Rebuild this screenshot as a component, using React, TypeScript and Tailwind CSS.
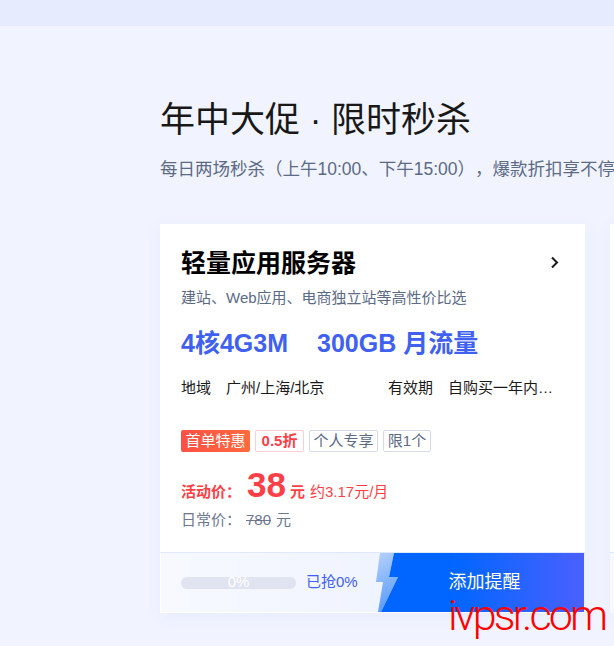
export default function App() {
  return (
    <div className="relative w-[614px] h-[646px] overflow-hidden bg-[#f1f4ff] [text-spacing-trim:space-all] font-['Liberation_Sans','Noto_Sans_CJK_SC',sans-serif]">
      <div className="h-[26px] bg-[#e6ecfe]" />
      <div className="pl-[160px] pt-[72px] w-[1000px]">
        <h1 className="text-[35px] leading-[44px] text-[#181818] font-normal">年中大促 · 限时秒杀</h1>
        <p className="mt-[14px] text-[17.5px] leading-[26px] text-[#5b6a85] whitespace-nowrap">每日两场秒杀（上午10:00、下午15:00），爆款折扣享不停</p>
        <div className="flex gap-[25px] mt-[42px]">
          <div className="w-[425px] h-[389px] bg-white flex flex-col shrink-0 shadow-[0_4px_16px_rgba(80,110,200,0.06)]">
            <div className="flex-1 px-[21px] pt-[23px]">
              <div className="flex items-center justify-between pr-[3px]">
                <h2 className="text-[25px] leading-[32px] font-bold text-black">轻量应用服务器</h2>
                <svg width="12" height="14" viewBox="0 0 12 14" fill="none" stroke="#1a1a1a" strokeWidth="2"><path d="M3 1.5l5 5-5 5" /></svg>
              </div>
              <p className="mt-[8px] text-[15px] leading-[22px] text-[#5b6a85]">建站、Web应用、电商独立站等高性价比选</p>
              <div className="mt-[17px] text-[25px] leading-[34px] font-bold text-[#4060f0] flex gap-[29px]">
                <span>4核4G3M</span><span>300GB 月流量</span>
              </div>
              <div className="mt-[17px] flex text-[15px] leading-[22px] text-[#1a1a1a] whitespace-nowrap">
                <div className="w-[207px] flex gap-[15px]"><span>地域</span><span>广州/上海/北京</span></div>
                <div className="flex gap-[15px]"><span>有效期</span><span>自购买一年内…</span></div>
              </div>
              <div className="mt-[31px] flex gap-[5px] text-[15px] leading-[20px] whitespace-nowrap">
                <span className="h-[22px] w-[69px] text-center leading-[22px] rounded-[2px] bg-gradient-to-r from-[#ff4f45] to-[#ff6a3d] text-white">首单特惠</span>
                <span className="h-[22px] w-[49px] text-center rounded-[2px] border border-[#ffcdd2] text-[#ff3f48] font-bold">0.5折</span>
                <span className="h-[22px] w-[69px] text-center rounded-[2px] border border-[#d5daea] text-[#5b6a85]">个人专享</span>
                <span className="h-[22px] w-[48px] text-center rounded-[2px] border border-[#d5daea] text-[#5b6a85]">限1个</span>
              </div>
              <div className="mt-[13px] flex items-baseline text-[#ff3f48]">
                <span className="w-[65px] text-[15px] font-bold">活动价：</span>
                <span className="ml-[1px] text-[35px] leading-[40px] font-bold">38</span>
                <span className="ml-[4px] text-[15px] font-bold">元</span>
                <span className="ml-[5px] text-[15px]">约3.17元/月</span>
              </div>
              <div className="mt-[5px] flex text-[15px] leading-[20px] text-[#6d7890]">
                <span className="w-[65px]">日常价：</span>
                <span className="line-through">780</span>
                <span className="ml-[5px]">元</span>
              </div>
            </div>
            <div className="h-[61px] flex border-b border-l border-white border-t border-t-[#dfe9fb] pr-[1px] bg-gradient-to-r from-[#f7f9ff] to-[#e9effe]">
              <div className="flex-1 flex items-center pl-[20px]">
                <div className="w-[115px] h-[12px] rounded-full bg-[#e0e3f0] flex items-center justify-center text-[15px] text-white">0%</div>
                <span className="ml-[10px] text-[15px] text-[#4060f0]">已抢0%</span>
              </div>
              <div className="relative w-[208px] h-[59px] flex items-center justify-center pl-[9px]">
                <svg className="absolute inset-0" width="208" height="59" viewBox="0 0 208 59">
                  <defs>
                    <linearGradient id="bolt" x1="0" y1="0" x2="0.2" y2="1">
                      <stop offset="0" stopColor="#b5d1fb" />
                      <stop offset="1" stopColor="#5c9dfb" />
                    </linearGradient>
                    <linearGradient id="btn" x1="0" y1="0" x2="1" y2="0">
                      <stop offset="0.35" stopColor="#0066ff" />
                      <stop offset="1" stopColor="#4a60ff" />
                    </linearGradient>
                  </defs>
                  <path d="M4 0H18L13 24H22L5 59H2L7 29H0Z" fill="url(#bolt)" />
                  <path d="M18 0H208V59H5L22 24H13Z" fill="url(#btn)" />
                </svg>
                <span className="relative text-[18px] text-white">添加提醒</span>
              </div>
            </div>
          </div>
          <div className="w-[425px] h-[389px] bg-white flex flex-col shrink-0 shadow-[0_4px_16px_rgba(80,110,200,0.06)]">
            <div className="flex-1" />
            <div className="h-[61px] border-t border-t-[#dfe9fb] bg-[#f7f9ff]" />
          </div>
        </div>
      </div>
      <span className="absolute left-[448px] top-[601px] text-[43px] leading-[28px] tracking-[-2.8px] font-light text-[#ff0000] font-['Roboto',sans-serif] whitespace-nowrap">ivpsr.com</span>
    </div>
  );
}
